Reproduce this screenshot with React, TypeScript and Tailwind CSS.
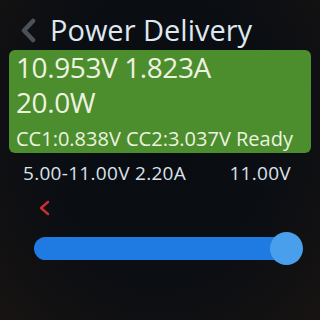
import React from "react";

export default function App() {
  return (
    <div
      className="w-[320px] h-[320px] overflow-hidden bg-[radial-gradient(ellipse_at_50%_40%,#080b10_0%,#0b0e13_55%,#171311_100%)] text-[#dfe8f0]"
      style={{ fontFamily: '"Open Sans", "Noto Sans", sans-serif' }}
    >
      {/* Title */}
      <div className="flex items-start pt-[12px] h-[48px]">
        <svg width="16" height="25" viewBox="0 0 16 25" className="ml-[20px] mt-[6px] shrink-0">
          <path d="M13 3 L4 12.5 L13 22" fill="none" stroke="#4a5159" strokeWidth="4.5" strokeLinecap="round" strokeLinejoin="round" />
        </svg>
        <div className="ml-[14px] text-[29px] leading-[36px]">Power Delivery</div>
      </div>

      {/* Green panel */}
      <div className="mx-[9px] mt-[2px] h-[103px] rounded-[6px] bg-[#4c8d2d] px-[7px] pt-[2px] text-[#eef3e0]">
        <div className="text-[28px] leading-[30px] tracking-[-0.4px]">10.953V 1.823A</div>
        <div className="text-[28px] leading-[30px] mt-[5px] tracking-[-0.4px]">20.0W</div>
        <div className="text-[20px] leading-[24px] mt-[10px]">CC1:0.838V CC2:3.037V Ready</div>
      </div>

      {/* Info row */}
      <div className="flex justify-between mt-[8px] pl-[23px] pr-[29px] text-[19px] leading-[24px] text-[#d9e2ea] tracking-[0.3px]">
        <span>5.00-11.00V 2.20A</span>
        <span>11.00V</span>
      </div>

      {/* Red chevron */}
      <svg width="12" height="16" viewBox="0 0 12 16" className="ml-[38px] mt-[15px] block">
        <path d="M10 2 L3 8 L10 14" fill="none" stroke="#c2302b" strokeWidth="2.6" strokeLinecap="round" strokeLinejoin="round" />
      </svg>

      {/* Slider */}
      <div className="relative ml-[34px] mt-[16px] w-[269px] h-[33px]">
        <div className="absolute left-0 top-[5px] h-[23px] w-[262px] rounded-full bg-[#1f7be2]" />
        <div className="absolute right-0 top-0 h-[33px] w-[33px] rounded-full bg-[#4a9fec]" />
      </div>
    </div>
  );
}
